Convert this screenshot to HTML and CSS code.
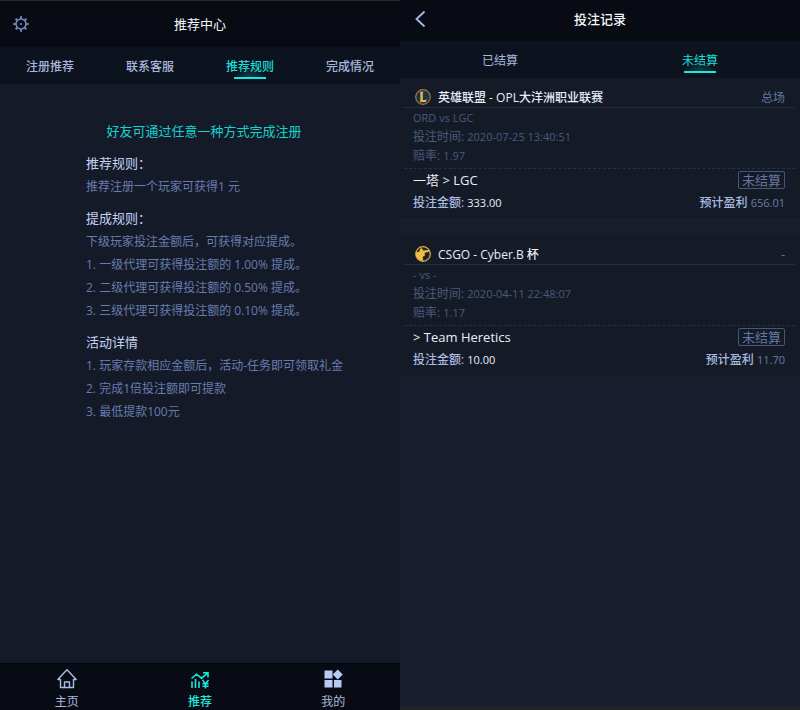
FILE: index.html
```html
<!DOCTYPE html>
<html lang="zh-CN">
<head>
<meta charset="utf-8">
<meta name="viewport" content="width=device-width, initial-scale=1">
<title>推荐中心</title>
<link rel="stylesheet" href="styles.css">
</head>
<body>
<main class="screens">
  <section class="screen referral">
    <header class="bar">
      <button class="icon-button" type="button" aria-label="设置">
        <svg width="16" height="16" viewBox="0 0 16 16" fill="none" stroke="#7188bd" stroke-width="1.6">
          <circle cx="8" cy="8" r="5"/>
          <circle cx="8" cy="8" r="1.1" fill="#7188bd" stroke="none"/>
          <path stroke-width="2" d="M8 .3v2.500M8 13.200v2.500M.3 8h2.500M13.200 8h2.500M2.600 2.600l1.700 1.700M11.700 11.700l1.700 1.700M2.600 13.400l1.700-1.700M11.700 4.300l1.700-1.700"/>
        </svg>
      </button>
      <h1>推荐中心</h1>
    </header>
    <nav class="tabs">
      <a href="#register">注册推荐</a>
      <a href="#service">联系客服</a>
      <a class="active" href="#rules">推荐规则</a>
      <a href="#status">完成情况</a>
    </nav>
    <article class="rules">
      <p class="lead">好友可通过任意一种方式完成注册</p>
      <section>
        <h2>推荐规则：</h2>
        <p>推荐注册一个玩家可获得1 元</p>
      </section>
      <section>
        <h2>提成规则：</h2>
        <p>下级玩家投注金额后，可获得对应提成。</p>
        <p>1. 一级代理可获得投注额的 1.00% 提成。</p>
        <p>2. 二级代理可获得投注额的 0.50% 提成。</p>
        <p>3. 三级代理可获得投注额的 0.10% 提成。</p>
      </section>
      <section>
        <h2>活动详情</h2>
        <p>1. 玩家存款相应金额后，活动-任务即可领取礼金</p>
        <p>2. 完成1倍投注额即可提款</p>
        <p>3. 最低提款100元</p>
      </section>
    </article>
    <nav class="dock">
      <a href="#home">
        <svg width="20" height="20" viewBox="0 0 20 20" fill="none" stroke="#a9bde8" stroke-width="1.4" stroke-linejoin="round">
          <path d="M.8 10.500 10 .800l9.200 9.700h-2.700v8h-13v-8zM7.500 18.500v-5.500h5v5.500"/>
        </svg>
        主页
      </a>
      <a class="active" href="#refer">
        <svg width="20" height="20" viewBox="0 0 20 20" fill="none" stroke="#19e9dc" stroke-width="1.6">
          <path d="M1.500 9.500 6.500 5.200l5 4 6-5M13 3.700h5v4.500M2 19v-6.500M5.500 19v-9M9 19v-6.500M12.500 11l3 4 3-4M15.500 15v4.500M12.500 14.800h6M12.500 17.200h6"/>
        </svg>
        推荐
      </a>
      <a href="#mine">
        <svg width="20" height="20" viewBox="0 0 20 20" fill="#b8caf4">
          <path d="M1.500 1.500h8v8h-8zM1.500 11h8v7.500h-8zM11 11h7.500v7.500H11zM14.700.500l5 5-5 5-5-5z"/>
        </svg>
        我的
      </a>
    </nav>
  </section>

  <section class="screen bets">
    <header class="bar">
      <button class="icon-button" type="button" aria-label="返回">
        <svg width="16" height="16" viewBox="0 0 16 16" fill="none" stroke="#a6b8df" stroke-width="1.9">
          <path d="M11.500 .500 3.500 8l8 7.500"/>
        </svg>
      </button>
      <h1>投注记录</h1>
    </header>
    <nav class="tabs">
      <a href="#settled">已结算</a>
      <a class="active" href="#open">未结算</a>
    </nav>
    <div class="records">
      <article class="card">
        <header class="match">
          <svg width="16" height="16" viewBox="0 0 16 16">
            <circle cx="8" cy="8" r="7.300" fill="#173843" stroke="#a9713f" stroke-width="1.200"/>
            <path d="M4.500 2.800h4L7.800 4v7h2.700l1.200-1.200-.7 3.200H4.500l.9-1.200V4z" fill="#f0b35a"/>
          </svg>
          <h2>英雄联盟 - OPL大洋洲职业联赛</h2>
          <span class="scope">总场</span>
        </header>
        <div class="details">
          <p><span class="latin">ORD vs LGC</span></p>
          <p>投注时间: <span class="latin">2020-07-25 13:40:51</span></p>
          <p>赔率: <span class="latin">1.97</span></p>
        </div>
        <div class="row pick"><strong>一塔 &gt; LGC</strong><span class="state">未结算</span></div>
        <div class="row money">
          <span>投注金额: <b class="latin">333.00</b></span>
          <span>预计盈利 <i class="latin">656.01</i></span>
        </div>
      </article>
      <article class="card">
        <header class="match">
          <svg width="16" height="16" viewBox="0 0 16 16">
            <circle cx="8" cy="8" r="7.300" fill="#24232a" stroke="#e2b044" stroke-width="1.200"/>
            <path d="M1 6.500 4.500 5.500 5 3l2-1 1 2.500L14 4v1.500L9.500 7l.5 2.500-2.500 1.500L8.500 15 4 14 1 10z" fill="#f0bd45"/>
          </svg>
          <h2>CSGO - Cyber.B 杯</h2>
          <span class="scope">-</span>
        </header>
        <div class="details">
          <p><span class="latin">- vs -</span></p>
          <p>投注时间: <span class="latin">2020-04-11 22:48:07</span></p>
          <p>赔率: <span class="latin">1.17</span></p>
        </div>
        <div class="row pick"><strong>&gt; Team Heretics</strong><span class="state">未结算</span></div>
        <div class="row money">
          <span>投注金额: <b class="latin">10.00</b></span>
          <span>预计盈利 <i class="latin">11.70</i></span>
        </div>
      </article>
    </div>
  </section>
</main>
</body>
</html>
```
FILE: styles.css
```css
*,
*::after {
  box-sizing: border-box;
}

body,
h1,
h2,
p {
  margin: 0;
}

body {
  background: #191e2f;
  color: #a9b9dd;
  font: 12px/20px "Open Sans", "Noto Sans CJK SC", sans-serif;
}

a {
  color: inherit;
  text-decoration: none;
}

.screens {
  display: grid;
  grid-template-columns: 1fr 1fr;
  min-height: 100vh;
}

.screen {
  display: flex;
  flex-direction: column;
}

.bar {
  display: grid;
  grid-template-columns: 40px 1fr 40px;
  align-items: center;
  height: 47px;
  background: #080b13;
}

.referral .bar {
  border-top: 1px solid #242a2c;
}

.bar h1 {
  color: #f7f9fc;
  font-size: 13px;
  font-weight: 400;
  text-align: center;
}

.icon-button {
  display: flex;
  justify-content: flex-end;
  padding: 0 11px 0 0;
  border: 0;
  background: none;
}

.tabs {
  display: flex;
  height: 37px;
  background: #0d121f;
}

.tabs a {
  flex: 1;
  display: flex;
  flex-direction: column;
  align-items: center;
  padding-top: 10px;
  font-weight: 500;
}

.tabs .active {
  color: #18dfd7;
}

.tabs .active::after {
  content: "";
  width: 32px;
  height: 12px;
  margin-top: -10px;
  border-bottom: 2px solid #19e9dc;
  background: radial-gradient(ellipse at bottom, #10707880, transparent 70%);
}

.rules {
  flex: 1;
  display: flex;
  flex-direction: column;
  gap: 9px;
  padding: 36px 0 0 86px;
  background: #151a28;
  color: #687cae;
  line-height: 23px;
}

.rules .lead {
  margin: 0 78px 0 0;
  color: #12d3cc;
  font-size: 13px;
  text-align: center;
}

.rules h2 {
  color: #c4d4f5;
  font-size: 13px;
  font-weight: 400;
}

.dock {
  display: flex;
  height: 47px;
  border-top: 1px solid #05070d;
  background: #080b13;
}

.dock a {
  flex: 1;
  display: flex;
  flex-direction: column;
  align-items: center;
  gap: 4px;
  padding-top: 5px;
  line-height: 17px;
}

.dock svg {
  flex: none;
}

.dock .active {
  color: #19e9dc;
  font-weight: 500;
}

.bets {
  border-bottom: 4px solid #232427;
}

.bets .bar {
  height: 41px;
  padding-bottom: 3px;
}

.bets .bar h1 {
  font-weight: 500;
}

.bets .tabs a {
  font-weight: 400;
}

.records {
  display: flex;
  flex-direction: column;
  gap: 17px;
}

.card {
  height: 140px;
  padding: 9px 5px 0 4px;
  background: #151a27;
  line-height: 19px;
}

.match {
  display: flex;
  align-items: center;
  gap: 7px;
  height: 21px;
  padding: 0 10px 0 11px;
  border-bottom: 1px solid #242d43;
}

.match h2 {
  flex: 1;
  color: #e9eefa;
  font-size: 12px;
  font-weight: 500;
}

.scope {
  color: #63769f;
}

.details {
  height: 61px;
  padding: 0 9px;
  border-bottom: 1px dashed #273047;
  color: #4a5a7d;
}

.latin {
  font-size: 11px;
}

.row {
  display: flex;
  align-items: center;
  justify-content: space-between;
  height: 22px;
  padding: 0 10px 0 9px;
}

.pick strong {
  color: #e9eefa;
  font-size: 13px;
  font-weight: 400;
}

.state {
  padding: 0 3px;
  border: 1px solid #43577f;
  border-radius: 2px;
  color: #6578a2;
  font-size: 13px;
  line-height: 16px;
}

.money {
  color: #a9bde3;
  font-weight: 500;
}

.money b {
  color: #e9eefa;
  font-weight: 500;
}

.money i {
  color: #6a7da7;
  font-style: normal;
  font-weight: 400;
}
```
